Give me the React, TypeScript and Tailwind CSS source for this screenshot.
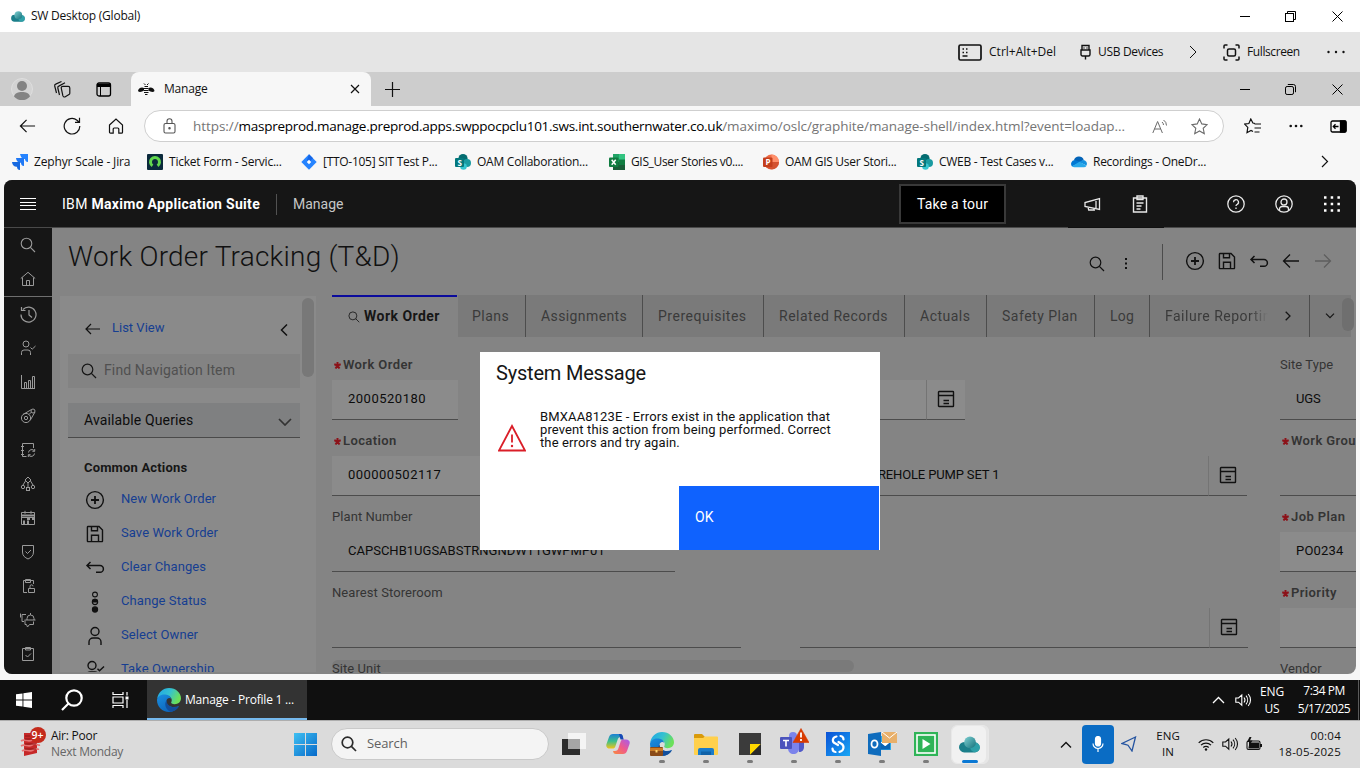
import type { ReactNode } from "react";

type IconProps = { size?: number; w?: number; h?: number; vb?: string; sw?: number; className?: string; children: ReactNode };

function Svg({ size = 16, w, h, vb, sw = 1, className = "", children }: IconProps) {
  const width = w ?? size;
  const height = h ?? size;
  return (
    <svg width={width} height={height} viewBox={vb ?? `0 0 ${width} ${height}`} fill="none" stroke="currentColor" strokeWidth={sw} className={`shrink-0 ${className}`}>
      {children}
    </svg>
  );
}

const SearchIcon = ({ size = 16, className = "", sw = 1.1 }: { size?: number; className?: string; sw?: number }) => (
  <Svg size={size} vb="0 0 16 16" sw={sw} className={className}><circle cx="6.5" cy="6.5" r="5.3" /><path d="M10.4 10.4 15 15" /></Svg>
);
const BackArrow = ({ w = 18, className = "" }: { w?: number; className?: string }) => (
  <Svg w={w} h={16} vb="0 0 18 16" sw={1.3} className={className}><path d="M8 1.5 1.5 8 8 14.5M1.5 8H17" /></Svg>
);
const CircleAdd = ({ className = "" }) => (
  <Svg size={20} sw={1.4} className={className}><circle cx="10" cy="10" r="8.4" /><path d="M10 6v8M6 10h8" strokeWidth="1.8" /></Svg>
);
const SaveIcon = ({ className = "" }) => (
  <Svg size={18} sw={1.4} className={className}><path d="M2 1.5h11L16.5 5v11a.6.6 0 0 1-.6.6H2a.6.6 0 0 1-.6-.6V2a.6.6 0 0 1 .6-.5ZM5.5 1.5v4.3h6V1.5M5.5 16.5v-6.2h7v6.2" /></Svg>
);
const UndoIcon = ({ className = "" }) => (
  <Svg w={20} h={14} sw={1.5} className={className}><path d="M5.500 1 2 4.500 5.500 8M2 4.500h13a3.400 3.400 0 0 1 0 6.800H11" /></Svg>
);
const StatusIcon = () => (
  <Svg w={8} h={22} sw={1.1}><circle cx="4" cy="3.500" r="2.400" /><circle cx="4" cy="11" r="2.600" /><path d="M1.400 11a2.600 2.600 0 0 1 5.200 0Z" fill="currentColor" /><circle cx="4" cy="18.500" r="2.600" fill="currentColor" /></Svg>
);
const UserIcon = () => (
  <Svg w={16} h={20} sw={1.4}><circle cx="8" cy="5.5" r="4" /><path d="M2 19v-3a4 4 0 0 1 4-4h4a4 4 0 0 1 4 4v3" /></Svg>
);
const OwnerIcon = () => (
  <Svg w={20} h={20} sw={1.4}><circle cx="7" cy="5.5" r="4" /><path d="M1 19v-3a4 4 0 0 1 4-4h5a4 4 0 0 1 4 4v3M12.5 8.7l2 2L19 6.5" /></Svg>
);
const DetailIcon = () => (
  <Svg size={18} sw={1.4} className="mb-px text-[#111]"><rect x="1.5" y="1.5" width="15" height="15" rx=".6" /><path d="M1.5 5.5h15M6.5 10.500h5.500M6.5 13.500h5.500" /></Svg>
);

function WindowButtons({ rounded = false }: { rounded?: boolean }) {
  return (
    <div className="flex text-black">
      <div className="flex w-[46px] items-center justify-center"><Svg size={10}><path d="M0 5.5h10" /></Svg></div>
      <div className="flex w-[45px] items-center justify-center">
        <Svg size={11}><rect x=".5" y="2.5" width="8" height="8" rx={rounded ? 1.6 : 0} /><path d={rounded ? "M2.8.5h5.6a2.1 2.1 0 0 1 2.1 2.1v5.6" : "M2.5 2.5v-2h8v8h-2"} /></Svg>
      </div>
      <div className="flex w-[47px] items-center justify-center pl-px"><Svg size={11}><path d="m.5.5 10 10M10.5.5l-10 10" /></Svg></div>
    </div>
  );
}

const Cloud = ({ w = 14, h = 11 }: { w?: number; h?: number }) => (
  <svg width={w} height={h} viewBox="0 0 20 16" className="shrink-0">
    <defs>
      <linearGradient id="cl" x1="0" y1="0" x2="1" y2="1"><stop offset="0" stopColor="#7fd0d2" /><stop offset="1" stopColor="#15727c" /></linearGradient>
    </defs>
    <path d="M5 5.5a5 5 0 0 0 0 10h10a4.6 4.6 0 0 0 0-9.4Z" fill="#1b7f8a" />
    <circle cx="15.3" cy="10.8" r="4.6" fill="#2ea0a8" />
    <circle cx="10.5" cy="6" r="5.6" fill="url(#cl)" />
  </svg>
);

const EdgeLogo = ({ id, size = 24 }: { id: string; size?: number }) => (
  <svg width={size} height={size} viewBox="0 0 24 24" className="shrink-0">
    <defs>
      <linearGradient id={`${id}a`} x1="0" y1="0" x2="1" y2=".4"><stop offset="0" stopColor="#1fa5e6" /><stop offset=".55" stopColor="#35c1d0" /><stop offset="1" stopColor="#6be05a" /></linearGradient>
      <linearGradient id={`${id}b`} x1="0" y1="0" x2=".7" y2="1"><stop offset="0" stopColor="#1b8fe0" /><stop offset="1" stopColor="#0b62b8" /></linearGradient>
    </defs>
    <path d="M.2 10.500C1.200 4.500 6 0 12 0c7 0 12 5 12 10.300 0 3.800-3 5.900-6.300 5.900-2.600 0-3.900-.9-3.500-1.900 1.400-2 .3-6.300-4.500-6.500C5 7.500 1.500 8.500.2 10.500Z" fill={`url(#${id}a)`} />
    <path d="M0 12C0 9 3.500 6 8.500 6.500c3 .2 5.300 2 5.700 4.300-1.500-1.500-4.200-1-4.700 1.700-.8 5 5.500 8.300 12.500 5.500C19.500 22 16 24 12 24 5.200 24 0 18.600 0 12Z" fill={`url(#${id}b)`} />
    <path d="M9.500 12.300c-2.500 3.500-1 9.200 4 11.500 3.500-.4 6.500-2.300 8.600-5.600-6.500 2.500-12.500 0-12.600-5.900Z" fill="#124e9c" />
  </svg>
);

const SharePoint = () => (
  <svg width="16" height="16" viewBox="0 0 16 16"><circle cx="8" cy="4.600" r="4.600" fill="#036c70" /><circle cx="12" cy="9" r="4" fill="#1a9ba1" /><circle cx="8.500" cy="12.500" r="3.300" fill="#37c6d0" /><rect y="4" width="9" height="9" rx="1" fill="#03787c" /><text x="4.500" y="11.500" textAnchor="middle" className="fill-white font-['Open_Sans',sans-serif] text-[8px] font-bold">S</text></svg>
);

const bookmarks: { label: string; icon: ReactNode; cls: string }[] = [
  { label: "Ticket Form - Servic...", cls: "tracking-[-0.22px]", icon: <svg width="16" height="16" viewBox="0 0 16 16"><rect width="16" height="16" rx="1" fill="#0b2a3c" /><path d="M5.500 11.800A4.500 4.500 0 1 1 10.500 11.800" fill="none" stroke="#62d84e" strokeWidth="3" /></svg> },
  { label: "[TTO-105] SIT Test P...", cls: "tracking-[-0.28px]", icon: <svg width="16" height="16" viewBox="0 0 16 16"><path d="M8 .3 15.700 8 8 15.700.3 8Z" fill="#2684ff" /><path d="m8 .3 4 4-4 3.700-2-2Z" fill="#1565e6" /><path d="m8 5.800 2.200 2.200L8 10.200 5.800 8Z" fill="#fff" /></svg> },
  { label: "OAM Collaboration...", cls: "tracking-[-0.25px]", icon: <SharePoint /> },
  { label: "GIS_User Stories v0....", cls: "tracking-[-0.35px]", icon: <svg width="16" height="16" viewBox="0 0 16 16"><path d="M4 0h12v16H4Z" fill="#21a366" /><path d="M10 0h6v5h-6Z" fill="#33c481" /><path d="M4 0h6v8H4Z" fill="#21a366" /><path d="M4 8h6v8H4ZM10 11h6v5h-6Z" fill="#185c37" /><path d="M10 6h6v5h-6Z" fill="#107c41" /><rect y="3.500" width="9.500" height="9.500" rx="1" fill="#107c41" /><path d="m2.700 5.700 4 5M6.700 5.700l-4 5" stroke="#fff" strokeWidth="1.500" /></svg> },
  { label: "OAM GIS User Stori...", cls: "tracking-[-0.28px]", icon: <svg width="16" height="16" viewBox="0 0 16 16"><circle cx="8.500" cy="8" r="7.500" fill="#ed6c47" /><path d="M8.500.5A7.500 7.500 0 0 1 16 8H8.500Z" fill="#ff8f6b" /><path d="M1.500 10.500A7.500 7.500 0 0 0 16 8H8Z" fill="#d35230" /><rect y="3.500" width="9.500" height="9.500" rx="1" fill="#c43e1c" /><text x="4.800" y="11.200" textAnchor="middle" className="fill-white font-['Open_Sans',sans-serif] text-[8px] font-bold">P</text></svg> },
  { label: "CWEB - Test Cases v...", cls: "tracking-[-0.28px]", icon: <SharePoint /> },
  { label: "Recordings - OneDr...", cls: "tracking-[-0.26px]", icon: <svg width="16" height="12" viewBox="0 0 16 12"><path d="M3 4a5.200 5.200 0 0 1 9.700-.5L8 8Z" fill="#0364b8" /><path d="M3.500 4A4 4 0 0 0 1 10.500L10 6.300Z" fill="#0078d4" /><path d="M12 4a3.800 3.800 0 0 1 3.500 5.500L8 6Z" fill="#1490df" /><path d="M1 10.300 8.500 5.800l7 3.900a3 3 0 0 1-2.600 1.600H3.800A3.500 3.500 0 0 1 1 10.300Z" fill="#28a8ea" /></svg> },
];

const railTop: ReactNode[] = [
  <SearchIcon size={16} />,
  <Svg size={16}><path d="M.8 7.500 8 1.300l7.200 6.200M2.500 6.500v8h11v-8M6.500 14.500v-5h3v5" /></Svg>,
];
const railIcons: ReactNode[] = [
  <Svg size={17} sw={1.200}><path d="M3 3.500a7.500 7.500 0 1 1-2 5M1.500 1v3.500h4M9 4v5l3 2.500" /></Svg>,
  <Svg size={16}><circle cx="6" cy="4" r="3" /><path d="M1.500 15v-2.500A2.500 2.500 0 0 1 4 10h4a2.500 2.500 0 0 1 2.500 2.500V15M10.500 7.500l1.700 1.700L15.500 6" /></Svg>,
  <Svg size={16}><path d="M1.500 1v13.500H15M4.500 14.500v-6h2v6M8.500 14.500v-8h2v8M12.500 14.500v-12h2v12" /></Svg>,
  <Svg size={16}><circle cx="6" cy="10" r="4.600" /><circle cx="6" cy="10" r="1.700" /><circle cx="13" cy="3" r="2" /><path d="m3 6.500 8.500-5M10.200 12.300 15 4M9 6.500l2.500-2.500" /></Svg>,
  <Svg size={16}><path d="M13.500 6V1.500h-11v13h4M1 4.500h3M1 8.500h3M1 12.500h3M14.500 9a3.300 3.300 0 0 0-6 1.500M8.500 13a3.300 3.300 0 0 0 6-1.500M14.700 7v2.300h-2.300M8.300 15v-2.300h2.300" /></Svg>,
  <Svg size={16}><path d="M8 1 11 4 8 7 5 4ZM8 7v4M5.500 5 3 9M10.500 5 13 9" /><circle cx="3" cy="11" r="1.700" /><circle cx="13" cy="11" r="1.700" /><rect x="6.500" y="11.500" width="3" height="3" /></Svg>,
  <Svg size={16}><path d="M1.500 2.500h13v12h-13ZM5 .8v3M11 .8v3" /><path d="M2 4.500h12v2H2ZM7 7h3v3H7ZM12 7h2v3h-2ZM3 10.500h2v3.500H3ZM7 10.500h2v3.500H7Z" fill="currentColor" stroke="none" /><path d="M1.500 7.500h13" /></Svg>,
  <Svg size={16}><path d="M2.500 1.500h11V8c0 4-2.500 5.500-5.500 7-3-1.500-5.500-3-5.500-7ZM5.500 7.500l2 2L11 6" /></Svg>,
  <Svg size={16}><path d="M7 14.500H3.500v-12h10V6M5.500 1.500h5v3h-5ZM8.500 10.500h6v4h-6ZM10 10.500V8.300a1.500 1.500 0 0 1 3 0" /></Svg>,
  <Svg size={16}><path d="M6 2.500H2v7h2M.5 1.500v4M13.500 9.500v3H9.500l-2 2.500-1-2.500H5v-5M5.500 8h10M7 8V6.500a3.500 3.500 0 0 1 7 0V8M10.500 3V1" /></Svg>,
  <Svg size={16}><path d="M2.500 2.500h11v12h-11ZM5.500 1.500h5v2.500h-5ZM5.500 9l2 2L11 7.500" /></Svg>,
];

const actions: { label: string; icon: ReactNode }[] = [
  { label: "New Work Order", icon: <CircleAdd /> },
  { label: "Save Work Order", icon: <SaveIcon /> },
  { label: "Clear Changes", icon: <UndoIcon /> },
  { label: "Change Status", icon: <StatusIcon /> },
  { label: "Select Owner", icon: <UserIcon /> },
  { label: "Take Ownership", icon: <OwnerIcon /> },
];

function Label({ text, required }: { text: string; required?: boolean }) {
  return (
    <div className={`flex h-[30px] items-center whitespace-nowrap text-[13px] text-[#343434] ${required ? "font-semibold tracking-[0.4px]" : "tracking-[0.07px]"}`}>
      {required && <Svg size={7} sw={2} className="ml-[2px] mr-[2px] text-[#8c1219]"><path d="M3.500 0v3.500M.3 2.300l3.200 1.200M6.700 2.300 3.500 3.500M1.500 6.500l2-3M5.500 6.500l-2-3" /></Svg>}
      {text}
    </div>
  );
}

function Field({ label, required, value = "", box = "w-full", fill = true, track = "tracking-[0.2px]" }: { label: string; required?: boolean; value?: string; box?: string; fill?: boolean; track?: string }) {
  return (
    <div className="h-[76px]">
      <Label text={label} required={required} />
      <div className={`flex h-10 items-center whitespace-nowrap border-b border-[#4c4c4c] pb-[2px] pl-4 text-[13px] text-[#0c0c0c] ${track} ${box} ${fill ? "bg-[#8b8b8b]" : ""}`}>{value}</div>
    </div>
  );
}

function DetailField({ value = "", width, fill = false }: { value?: string; width: string; fill?: boolean }) {
  return (
    <div className="flex h-[76px] pt-[30px]">
      <div className={`flex h-10 items-center whitespace-nowrap border-b border-[#4c4c4c] pb-[2px] pl-[78px] text-[13px] tracking-[-0.15px] text-[#0c0c0c] ${width} ${fill ? "bg-[#8b8b8b]" : ""}`}>{value}</div>
      <div className={`flex h-10 w-[39px] items-center justify-center border-b border-l border-b-[#4c4c4c] border-l-[#747474] ${fill ? "bg-[#8b8b8b]" : ""}`}><DetailIcon /></div>
    </div>
  );
}

const tabs = [
  { label: "Plans", cls: "w-[68px] pl-[14px]" },
  { label: "Assignments", cls: "w-[117px] pl-[15px] tracking-[0.4px]" },
  { label: "Prerequisites", cls: "w-[121px] pl-[15px] tracking-[0.52px]" },
  { label: "Related Records", cls: "w-[141px] pl-[15px]" },
  { label: "Actuals", cls: "w-[82px] pl-[15px]" },
  { label: "Safety Plan", cls: "w-[108px] pl-[15px]" },
  { label: "Log", cls: "w-[55px] pl-[15px] tracking-[0.3px]" },
];

const pinned: { icon: ReactNode; dot: boolean }[] = [
  { dot: false, icon: <svg width="24" height="24" viewBox="0 0 24 24"><rect x="6" y="1" width="18" height="16" fill="#f4f4f4" /><path d="M0 7h18v16H0Z" fill="#2c2c2c" /><path d="M6 7h12v10H6Z" fill="#a5a5a5" /></svg> },
  { dot: false, icon: <svg width="24" height="24" viewBox="0 0 24 24"><defs><linearGradient id="cp1" x1="0" y1="0" x2="0" y2="1"><stop offset="0" stopColor="#1b7fd6" /><stop offset=".5" stopColor="#3cc08b" /><stop offset="1" stopColor="#f2c318" /></linearGradient><linearGradient id="cp2" x1="1" y1="0" x2="0" y2="1"><stop offset="0" stopColor="#a35cf0" /><stop offset=".5" stopColor="#ef5a8c" /><stop offset="1" stopColor="#f98a3c" /></linearGradient></defs><path d="M7 2h7c2 0 2.500 1 3 3h-2c-2 0-3 1-3.500 3l-2 6c-.5 2-1.500 2.500-3 2.500H4C1 16.500-.3 14.500.5 12L3 5c.7-2 2-3 4-3Z" fill="url(#cp1)" /><path d="M17 22h-7c-2 0-2.500-1-3-3h2c2 0 3-1 3.500-3l2-6c.5-2 1.500-2.500 3-2.500H20c3 0 4.300 2 3.500 4.500L21 19c-.7 2-2 3-4 3Z" fill="url(#cp2)" /><path d="M13 2h1c2 0 2.500 1 3 3l.7 2.500h-3.200Z" fill="#1848b5" /></svg> },
  { dot: true, icon: <div className="relative"><EdgeLogo id="e2" /><svg width="13" height="9" viewBox="0 0 13 9" className="absolute bottom-0 left-0"><rect width="13" height="9" rx="1" fill="#8a4a17" /><path d="M0 1h13v3H0Z" fill="#c97a26" /><path d="M5.500 3h2v2.500h-2Z" fill="#ffd36b" /></svg></div> },
  { dot: true, icon: <svg width="24" height="24" viewBox="0 0 24 24"><path d="M0 3a1 1 0 0 1 1-1h7l2.500 2.500V8H0Z" fill="#d99a0b" /><path d="M0 6h9l2-1.500h12a1 1 0 0 1 1 1V22a1 1 0 0 1-1 1H1a1 1 0 0 1-1-1Z" fill="#ffd04c" /><path d="M4 23v-5a2 2 0 0 1 2-2h12a2 2 0 0 1 2 2v5Z" fill="#1b7cc9" /><path d="M7 19.500h10V23H7Z" fill="#1062a8" /></svg> },
  { dot: true, icon: <svg width="22" height="22" viewBox="0 0 22 22"><path d="M0 0h22v22H0Z" fill="#3b3b3b" /><path d="M11 22V11h11Z" fill="#ffd800" /><path d="M22 11v11H11Z" fill="#2a2a2a" /></svg> },
  { dot: true, icon: <svg width="29" height="28" viewBox="0 0 29 28" className="-mt-1"><circle cx="13" cy="8" r="4" fill="#7b83eb" /><circle cx="21" cy="10" r="2.500" fill="#5059c9" /><path d="M17 12h7v7c0 3-2 5-5 5Z" fill="#5059c9" /><path d="M8 12h11v8c0 4-2.500 6-5.500 6S8 24 8 20Z" fill="#7b83eb" /><rect y="9" width="12" height="12" rx="1" fill="#4b53bc" /><path d="M3 12.500h6M6 12.500v6" stroke="#fff" strokeWidth="1.600" /><path d="M21 .5 29 14.500H13Z" fill="#d83b01" strokeLinejoin="round" stroke="#d83b01" strokeWidth=".6" /><path d="M21 4.500v5M21 11v2" stroke="#fff" strokeWidth="1.800" /></svg> },
  { dot: true, icon: <svg width="24" height="24" viewBox="0 0 24 24"><defs><linearGradient id="sn" x1="0" y1="0" x2="1" y2="1"><stop offset="0" stopColor="#0a51d6" /><stop offset="1" stopColor="#19a7f5" /></linearGradient></defs><rect width="24" height="24" fill="url(#sn)" /><path d="M10.500 4.500C6.500 5 5.500 9.500 9 11.300L12 13M12.500 10l2.500 1.500c4 2 3 7.500-1.500 8.300M14.500 4a3.500 3.500 0 0 1 3 3.500M9.500 20a3.500 3.500 0 0 1-3-3.500" stroke="#fff" strokeWidth="2.200" fill="none" strokeLinecap="round" /></svg> },
  { dot: true, icon: <svg width="29" height="24" viewBox="0 0 29 24"><path d="M11 4h12v14H11Z" fill="#28a8ea" /><path d="M12 10h10v7H12Z" fill="#fff" /><path d="m12 10 5 4 5-4v7.500H12Z" fill="#0a64b4" /><path d="M14 11h7l-3.500 3Z" fill="#fff" /><path d="M0 2 13 0v24L0 22Z" fill="#0f6cbd" /><ellipse cx="6.500" cy="12" rx="3" ry="3.700" stroke="#fff" strokeWidth="1.800" fill="none" /><path d="M14 0h15v11H14Z" fill="#e8b06b" /><path d="m14 0 7.500 6L29 0" stroke="#fff" fill="none" /></svg> },
  { dot: true, icon: <svg width="24" height="24" viewBox="0 0 24 24"><rect width="24" height="24" fill="#2fb457" /><rect x="3" y="3" width="18" height="18" fill="none" stroke="#fff" strokeWidth="1.600" /><path d="m8.500 7 8 5-8 5Z" fill="#fff" /></svg> },
];

const Volume = ({ className = "" }) => (
  <Svg w={17} h={14} sw={1.1} className={className}><path d="M.8 5v4.200h2.700l3.300 3V2L3.500 5ZM9 4.500a4 4 0 0 1 0 5M11 2.700a6.500 6.500 0 0 1 0 8.600M13.200 1a9 9 0 0 1 0 12" /></Svg>
);

export default function App() {
  return (
    <div className="flex h-[768px] w-[1360px] flex-col overflow-hidden bg-[#f7f7f7] font-['Open_Sans','Noto_Sans',sans-serif] text-[12px] text-[#111]">
      {/* Remote client title bar */}
      <div className="flex h-8 shrink-0 justify-between bg-white">
        <div className="flex items-center gap-[6px] pl-[11px] tracking-[-0.22px]"><Cloud /><span>SW Desktop (Global)</span></div>
        <WindowButtons />
      </div>

      {/* Remote client toolbar */}
      <div className="flex h-10 shrink-0 items-center whitespace-nowrap bg-[#e5e5e5] pl-[958px]">
        <div className="w-[31px]"><Svg w={24} h={17} sw={1.7}><rect x="1" y="1" width="22" height="15" rx="1.500" /><path d="M4.500 5h1.500M8 5h1.500M4.500 8.500h1.500M8 8.500h1.500M4.500 12h5" strokeWidth="1.500" /></Svg></div>
        <div className="w-[91px] tracking-[0.02px]">Ctrl+Alt+Del</div>
        <div className="w-[18px]"><Svg w={11} h={16} sw={1.400}><path d="M2 6V1.500h7V6M1 6h9v4.500a1.500 1.500 0 0 1-1.500 1.500h-6A1.500 1.500 0 0 1 1 10.500ZM5.500 12v3.500M4 3.500v1M7 3.500v1" /></Svg></div>
        <div className="w-[91px] tracking-[-0.33px]">USB Devices</div>
        <div className="w-[34px]"><Svg w={8} h={14}><path d="m1 1 6 6-6 6" /></Svg></div>
        <div className="w-6"><Svg size={17} sw={1.500}><path d="M1 4.500V2a1 1 0 0 1 1-1h2.500M12.500 1H15a1 1 0 0 1 1 1v2.500M16 12.500V15a1 1 0 0 1-1 1h-2.500M4.500 16H2a1 1 0 0 1-1-1v-2.500" /><rect x="4.500" y="5" width="8" height="7" rx="1.500" /></Svg></div>
        <div className="w-[80px] tracking-[-0.4px]">Fullscreen</div>
        <Svg w={19} h={4}><g fill="currentColor" stroke="none"><circle cx="1.500" cy="2" r="1.200" /><circle cx="9" cy="2" r="1.200" /><circle cx="16.500" cy="2" r="1.200" /></g></Svg>
      </div>

      {/* Browser tab strip */}
      <div className="flex h-[34px] shrink-0 bg-[#cdcdcd]">
        <div className="flex w-[131px] items-center pl-[11px]">
          <svg width="22" height="22" viewBox="0 0 22 22"><circle cx="11" cy="11" r="10.500" fill="#d3d3d3" stroke="#dedede" /><circle cx="11" cy="8" r="5" fill="#838383" /><path d="M3 18.500C4 15 7 14 11 14s7 1 8 4.500a10.500 10.500 0 0 1-16 0Z" fill="#838383" /></svg>
          <Svg size={18} sw={1.200} className="ml-5"><path d="M3.500 13 1.700 6a1.600 1.600 0 0 1 1-1.900L8.500 1.500M6.500 15 4.800 8a1.600 1.600 0 0 1 1-1.900l6.200-3.300" /><path d="M9.800 6.300h5.400a1.600 1.600 0 0 1 1.600 1.600v5.400c0 .6-.3 1-.8 1.300l-3.700 2.200c-.9.500-2 .1-2.400-.9L8.300 8.400a1.600 1.600 0 0 1 1.500-2.100Z" /></Svg>
          <Svg w={16} h={15} sw={1.300} className="ml-[25px] text-black"><rect x="1" y="1" width="13.500" height="13" rx="2" /><path d="M1 2.700h13.500M1 4h13.500" strokeWidth="2" /><path d="M4.500 4v10" strokeWidth="1" /></Svg>
        </div>
        <div className="flex w-[240px] items-center rounded-t-lg bg-[#f7f7f7] pl-[7px]">
          <svg width="17" height="12" viewBox="0 0 17 12" className="text-[#111]"><path d="M0 8C0 5.500 3.500 3.500 6 5v2.500C4 9 1 9.500 0 8ZM16.500 8c0-2.500-3.500-4.500-6-3v2.500C12.500 9 15.500 9.500 16.500 8Z" fill="currentColor" /><path d="M6 .5l1.500 1.500M10.500.5 9 2M6.500 3.500h3.500M6 5.500h4.500M6 7.500h4.500M6 9.500h4.500M7 11.500h2.500" stroke="currentColor" /></svg>
          <span className="ml-[9px] flex-1 tracking-[-0.2px]">Manage</span>
          <Svg size={10} sw={1.200} className="mr-[11px]"><path d="m1 1 8 8M9 1 1 9" /></Svg>
        </div>
        <div className="flex flex-1 items-center pl-[14px]"><Svg size={15} sw={1.200}><path d="M7.500 0v15M0 7.500h15" /></Svg></div>
        <WindowButtons rounded />
      </div>

      {/* Address bar */}
      <div className="flex h-10 shrink-0 items-center">
        <div className="flex w-[144px] items-center pl-[19px]">
          <BackArrow w={17} />
          <Svg size={18} sw={1.200} className="ml-[27px]"><path d="M16.800 9A7.800 7.800 0 1 1 14 3.200L16 5M16.500.8V5.300H12" /></Svg>
          <Svg size={16} sw={1.200} className="ml-[27px]"><path d="M1.500 7 8 1l6.500 6v7.200a1 1 0 0 1-1 1h-2.700V11a1 1 0 0 0-1-1H6.200a1 1 0 0 0-1 1v4.200H2.500a1 1 0 0 1-1-1Z" /></Svg>
        </div>
        <div className="flex h-8 w-[1080px] items-center rounded-full border border-[#cfcfcf] bg-white pl-[18px]">
          <Svg w={13} h={16} className="text-[#555]" sw={1.100}><rect x="1" y="5.500" width="11" height="9.500" rx="1.500" /><path d="M4 5.500V3.300a2.500 2.500 0 0 1 5 0v2.200" /><circle cx="6.500" cy="10.300" r=".7" fill="currentColor" /></Svg>
          <div className="ml-[17px] w-[959px] whitespace-nowrap text-[13.500px] tracking-[-0.06px] text-[#757575]">https://<span className="tracking-[-0.27px] text-black">maspreprod.manage.preprod.apps.swppocpclu101.sws.int.southernwater.co.uk</span>/maximo/oslc/graphite/manage-shell/index.html?event=loadap...</div>
          <Svg w={16} h={15} className="text-[#6b6b6b]"><path d="M.8 14 5.600 2.500 10.400 14M2.400 10h6.400M10 3a4 4 0 0 1 1.500 3M11.500 1a6.500 6.500 0 0 1 3 5.500" /></Svg>
          <Svg size={17} className="ml-[23px] text-[#6b6b6b]" sw={1.100}><path d="m8.500 1 2.300 4.900 5.400.7-4 3.700 1.100 5.400-4.800-2.700-4.800 2.700 1.100-5.400-4-3.700 5.400-.7Z" /></Svg>
        </div>
        <Svg w={18} h={17} sw={1.200} className="ml-5"><path d="M11 5.500 8.900 5 6.800 1 4.900 5.500l-4.300.6 3.200 3.300-.8 5.300 4-2.300 2 1.200M10.500 6h6.500M10.500 10h6.500M10.500 14h5" /></Svg>
        <Svg w={14} h={4} className="ml-[27px]"><g fill="currentColor" stroke="none"><circle cx="1.700" cy="2" r="1.300" /><circle cx="7" cy="2" r="1.300" /><circle cx="12.300" cy="2" r="1.300" /></g></Svg>
        <Svg w={17} h={13} sw={1.300} className="ml-[27px] text-black"><rect x="1" y="1" width="15" height="11" rx="1.500" /><path d="M10.500 1H15a1 1 0 0 1 1 1v9a1 1 0 0 1-1 1h-4.500Z" fill="currentColor" /><path d="M5.500 4.300 3.300 6.500l2.200 2.200M3.500 6.500h5" /></Svg>
      </div>

      {/* Bookmarks bar */}
      <div className="flex h-[34px] shrink-0 items-center whitespace-nowrap pb-[3px] pl-3">
        <div className="flex w-[135px] items-center gap-[6px] tracking-[-0.14px]">
          <svg width="16" height="16" viewBox="0 0 16 16"><path d="M8 0h8v8c-2.200 0-3-1.500-3-3-2 0-3.500 0-5-5Z" fill="#2684ff" /><path d="M4 4h8v8c-2.200 0-3-1.500-3-3.300C6.500 8.700 4.500 7.500 4 4Z" fill="#1f78f5" /><path d="M0 8h8v8c-2.200 0-3-1.500-3-3.300C2.500 12.700.5 11.500 0 8Z" fill="#1769e0" /></svg>
          Zephyr Scale - Jira
        </div>
        {bookmarks.map((b) => (
          <div key={b.label} className={`flex w-[154px] items-center gap-[6px] ${b.cls}`}><span className="flex w-4">{b.icon}</span>{b.label}</div>
        ))}
        <Svg w={8} h={13} sw={1.200} className="ml-[96px]"><path d="m1 1 5.500 5.500L1 12" /></Svg>
      </div>

      {/* Remote page */}
      <div className="relative mx-1 flex h-[494px] shrink-0 flex-col overflow-hidden rounded-lg bg-[#848484] font-['Roboto','Inter',sans-serif]">
        <header className="flex h-[47px] shrink-0 items-center bg-[#161616] pt-px text-[14px] text-[#e8e8e8]">
          <Svg w={16} h={12} className="ml-4 text-white"><path d="M0 .5h16M0 4.500h16M0 7.500h16M0 11.500h16" /></Svg>
          <div className="ml-[26px] w-[215px] whitespace-nowrap border-r border-[#525252] font-bold tracking-[0.3px] text-white"><span className="font-normal">IBM</span> Maximo Application Suite</div>
          <div className="ml-4 w-[606px] text-[#c6c6c6]">Manage</div>
          <div className="flex h-10 w-[107px] items-center justify-center border-2 border-[#393939] bg-black tracking-[0.2px] text-white">Take a tour</div>
          <div className="ml-[62px] flex w-12 justify-center"><Svg size={18} sw={1.300}><path d="M16.500 3.500v11L2 11.500v-4ZM5 12l.7 3h5.500l-.5-1.700M13 4.500v9" /></Svg></div>
          <div className="flex w-12 justify-center"><Svg w={16} h={18} sw={1.400}><path d="M1.500 3h13v14h-13Z" /><path d="M5 1h6v3.500H5ZM4.500 8h7M4.500 11h5M4.500 14h4" /></Svg></div>
          <div className="ml-12 flex w-12 justify-center"><Svg size={18} sw={1.300}><circle cx="9" cy="9" r="8.200" /><path d="M6.500 7.200a2.500 2.500 0 1 1 3.700 2.200c-.8.400-1.200.8-1.200 1.600M9 12.500V14" /></Svg></div>
          <div className="flex w-12 justify-center"><Svg size={18} sw={1.300}><circle cx="9" cy="9" r="8.200" /><circle cx="9" cy="7" r="3" /><path d="M4.500 15v-1a2.500 2.500 0 0 1 2.500-2.500h4a2.500 2.500 0 0 1 2.500 2.500v1" /></Svg></div>
          <div className="flex w-12 justify-center"><Svg size={16} sw={2.500} className="text-white"><path d="M0 1.500h16M0 8h16M0 14.500h16" strokeDasharray="2.500 4.200" /></Svg></div>
        </header>
        <div className="flex h-px shrink-0 bg-[#4a4a4a] pl-[1064px]"><div className="h-px w-24 bg-[#111]" /></div>

        <div className="flex h-[446px]">
          <nav className="w-12 shrink-0 bg-[#161616] text-[#9a9a9a]">
            <div className="border-b border-[#6f6f6f]">
              {railTop.map((icon, i) => <div key={i} className="flex h-[34px] items-center justify-center">{icon}</div>)}
            </div>
            {railIcons.map((icon, i) => <div key={i} className="flex h-[34px] items-center justify-center">{icon}</div>)}
          </nav>

          <main className="flex w-[1304px] flex-col overflow-hidden">
            <div className="flex h-[67px] shrink-0 text-[#111]">
              <h1 className="w-[1037px] whitespace-nowrap pl-4 pt-[10px] text-[28px] font-light leading-[38px] tracking-[0.22px]">Work Order Tracking (T&amp;D)</h1>
              <SearchIcon size={16} sw={1.200} className="mt-7" />
              <Svg w={4} h={12} className="ml-[19px] mt-[30px]"><path d="M1 0h2v2H1ZM1 4.500h2v2H1ZM1 9h2v2H1Z" fill="currentColor" stroke="none" /></Svg>
              <div className="ml-[34px] mt-4 h-9 w-px bg-[#4c4c4c]" />
              <div className="ml-4 flex h-[66px] items-center">
                <div className="flex w-8 justify-center"><CircleAdd /></div>
                <div className="flex w-8 justify-center"><SaveIcon /></div>
                <div className="flex w-8 justify-center"><UndoIcon className="mt-px" /></div>
                <div className="flex w-8 justify-center"><BackArrow /></div>
                <div className="flex w-8 justify-center text-[#5e5e5e]"><BackArrow className="rotate-180" /></div>
              </div>
            </div>

            <div className="flex h-[379px]">
              {/* Navigation panel */}
              <aside className="relative ml-2 mt-px h-[376px] w-64 shrink-0 overflow-hidden bg-[#8a8a8a] px-2 text-[13px]">
                <div className="absolute right-[2px] top-[2px] h-[79px] w-3 rounded-full bg-[#787878]" />
                <div className="flex h-[58px] items-center pl-[17px] pt-[6px]">
                  <Svg w={15} h={12} sw={1.200} className="mt-[2px]"><path d="M6 1 1 6l5 5M1 6h14" /></Svg>
                  <span className="ml-3 w-[168px] text-[#163e91]">List View</span>
                  <Svg w={8} h={12} sw={1.500} className="mt-1"><path d="M7 .5 1.500 6 7 11.500" /></Svg>
                </div>
                <div className="flex h-[34px] w-[232px] items-center bg-[#838383] pb-px pl-[13px] text-[14px] tracking-[0.12px] text-[#505050]">
                  <SearchIcon size={16} className="mr-[7px] mt-px text-[#161616]" sw={1.200} />Find Navigation Item
                </div>
                <div className="mt-[15px] flex h-[35px] w-[232px] items-center border-b border-[#4a4a4a] bg-[#7f8081] pl-4 text-[14px] tracking-[0.13px] text-[#0d0d0d]">
                  <span className="w-[194px]">Available Queries</span>
                  <Svg w={14} h={8} sw={1.700} className="mt-1 text-[#333]"><path d="m1 1 6 6 6-6" /></Svg>
                </div>
                <h2 className="mt-[19px] h-[25px] pl-4 pt-px font-bold tracking-[0.17px] text-[#161616]">Common Actions</h2>
                {actions.map((a) => (
                  <div key={a.label} className="flex h-[34px] items-center pl-[14px]">
                    <span className="mt-[2px] flex w-[26px] justify-center">{a.icon}</span>
                    <span className="ml-[13px] tracking-[0.08px] text-[#163e91]">{a.label}</span>
                  </div>
                ))}
              </aside>

              {/* Record form */}
              <section className="relative ml-4 w-[1024px] overflow-hidden">
                <div className="flex h-[42px] whitespace-nowrap text-[14px] tracking-[0.5px] text-[#3a3a3a]">
                  <div className="mr-px flex w-[125px] items-center border-t-2 border-[#0b0b9c] pb-px pl-4 font-bold tracking-[0.47px] text-[#161616]">
                    <SearchIcon size={12} className="mr-[4px] mt-px" />Work Order
                  </div>
                  {tabs.map((t) => (
                    <div key={t.label} className={`flex items-center border-r border-[#4d4d4d] bg-[#7a7a7a] ${t.cls}`}>{t.label}</div>
                  ))}
                  <div className="flex w-[160px] items-center border-r border-[#4d4d4d] bg-[#7a7a7a] pl-[15px]">
                    <span className="w-[103px] overflow-hidden [mask-image:linear-gradient(90deg,#000_82%,transparent)]">Failure Reporting</span>
                    <Svg w={6} h={10} sw={1.300} className="ml-[17px] text-[#161616]"><path d="m.7.7 4.300 4.300L.7 9.300" /></Svg>
                  </div>
                  <div className="flex w-[41px] items-center justify-center bg-[#7a7a7a] pr-[2px]"><Svg w={10} h={6} sw={1.200} className="text-[#161616]"><path d="m1 .7 4 4 4-4" /></Svg></div>
                </div>
                <div className="absolute left-[1010px] top-[3px] h-[33px] w-3 rounded-full bg-[#6f6f6f]" />
                <div className="absolute left-0 top-[365px] h-3 w-[522px] rounded-full bg-[#7a7a7a]" />

                <div className="relative grid h-[337px] grid-cols-[468px_480px_76px] pt-[13px]">
                  <div>
                    <Field label="Work Order" required value="2000520180" box="w-[126px]" track="tracking-[0.5px]" />
                    <Field label="Location" required value="000000502117" box="w-[343px]" track="tracking-[0.46px]" />
                    <Field label="Plant Number" value="CAPSCHB1UGSABSTRNGNDWT1GWPMP01" box="w-[343px]" fill={false} track="tracking-[0.01px]" />
                    <Field label="Nearest Storeroom" box="w-[409px]" fill={false} />
                    <Label text="Site Unit" />
                  </div>
                  <div>
                    <DetailField width="w-[126px]" fill />
                    <DetailField width="w-[408px]" value="REHOLE PUMP SET 1" />
                    <div className="h-[76px]" />
                    <DetailField width="w-[409px]" />
                  </div>
                  <div>
                    <Field label="Site Type" value="UGS" fill={false} track="tracking-[-0.1px]" />
                    <Field label="Work Grou" required fill={false} />
                    <Field label="Job Plan" required value="PO0234" />
                    <Field label="Priority" required />
                    <Label text="Vendor" />
                  </div>
                </div>
              </section>
            </div>
          </main>
        </div>

        {/* System message dialog */}
        <div role="dialog" className="absolute left-[476px] top-[172px] flex h-[198px] w-[400px] flex-col bg-white">
          <h2 className="h-[58px] pl-4 pt-[7px] text-[20px] leading-7 tracking-[-0.2px] text-[#161616]">System Message</h2>
          <div className="flex h-[76px] pl-[18px]">
            <Svg size={28} sw={1.800} className="mt-[14px] text-[#da1e28]"><path d="M14 2 27 26.500H1ZM14 10.500v8" /><circle cx="14" cy="22" r="1.200" fill="currentColor" stroke="none" /></Svg>
            <p className="ml-[14px] whitespace-nowrap text-[13px] leading-[13px] tracking-[0.11px] text-[#111]">BMXAA8123E - Errors exist in the application that<br />prevent this action from being performed. Correct<br />the errors and try again.</p>
          </div>
          <button className="ml-[199px] flex h-16 w-[200px] items-center bg-[#0f62fe] pb-[2px] pl-4 text-[14px] text-white">OK</button>
        </div>
      </div>
      <div className="h-[6px] shrink-0" />

      {/* Remote taskbar */}
      <div className="flex h-10 shrink-0 items-center bg-[#101010] text-white">
        <svg width="16" height="16" viewBox="0 0 16 16" className="ml-4 shrink-0"><path d="M0 2.300 6.500 1.400v6.200H0ZM7.400 1.200 16 0v7.600H7.400ZM0 8.400h6.500v6.200L0 13.700ZM7.400 8.400H16V16l-8.600-1.200Z" fill="#fff" /></svg>
        <Svg size={22} sw={2.200} className="ml-[29px]"><circle cx="13" cy="9" r="7.700" /><path d="M7.500 14.500 1 21" /></Svg>
        <Svg w={17} h={16} sw={1.200} className="ml-[29px]"><path d="M1 0v2.500h10V0M1 16v-2.500h10V16M1 5h10v6H1ZM15 0v3.500M15 8v8" /><path d="M13.500 4.500h3v3h-3Z" fill="currentColor" stroke="none" /></Svg>
        <div className="ml-[18px] flex h-10 w-[160px] shrink-0 items-center border-b-2 border-[#76b9ed] bg-[#333] pl-[10px] pt-[2px]">
          <EdgeLogo id="e1" /><span className="ml-1 whitespace-nowrap tracking-[-0.21px]">Manage - Profile 1 ...</span>
        </div>
        <Svg w={13} h={8} sw={1.300} className="ml-[905px]"><path d="m1 7 5.500-5.500L12 7" /></Svg>
        <Volume className="ml-[10px]" />
        <div className="ml-[5px] w-[30px] shrink-0 text-center leading-[17px] tracking-[-0.1px]">ENG<br />US</div>
        <div className="ml-[3px] w-[68px] shrink-0 whitespace-nowrap text-center leading-[18px] tracking-[-0.5px]">7:34 PM<br />5/17/2025</div>
        <div className="h-10 w-px shrink-0 bg-[#5a5a5a]" />
      </div>

      {/* Host taskbar */}
      <div className="flex h-12 shrink-0 items-center border-t border-[#aeaeae] bg-[#dbdbdb]">
        <svg width="26" height="30" viewBox="0 0 26 30" className="mb-[5px] ml-5 shrink-0"><path d="M4 6h13v20L4 29Z" fill="#c62828" /><path d="M1 14c4-3 7 2 11-1s5 1 7 0M1 19c4-3 7 2 11-1s5 1 8 0M2 24c4-3 7 2 11-1s4 0 6-1" stroke="#e57373" strokeWidth="1.600" fill="none" /><path d="M5 9h11M5 12h10M5 17h11M5 22h11" stroke="#8e1616" /><circle cx="18" cy="8" r="8" fill="#c42b1c" /><text x="17.500" y="12" textAnchor="middle" className="fill-white text-[10.500px] font-semibold">9+</text></svg>
        <div className="mb-[2px] ml-[5px] w-[243px] shrink-0 leading-4"><div className="tracking-[-0.25px]">Air: Poor</div><div className="tracking-[-0.25px] text-[#666]">Next Monday</div></div>
        <svg width="23" height="23" viewBox="0 0 23 23" className="shrink-0"><defs><linearGradient id="win" x1="0" y1="0" x2="1" y2="1"><stop offset="0" stopColor="#3fc0f2" /><stop offset="1" stopColor="#0669c9" /></linearGradient></defs><path d="M0 0h11v11H0ZM12 0h11v11H12ZM0 12h11v11H0ZM12 12h11v11H12Z" fill="url(#win)" /></svg>
        <div className="mb-px ml-[14px] flex h-8 w-[218px] shrink-0 items-center rounded-full border border-[#c9c9c9] bg-[#f4f4f4] pl-[9px] text-[13px] tracking-[-0.1px] text-[#606060]"><SearchIcon size={16} sw={1.700} className="mr-[10px] text-[#2b2b2b]" />Search</div>
        <div className="ml-[3px] flex w-[396px] shrink-0">
          {pinned.map((p, i) => (
            <div key={i} className="flex h-[46px] w-11 flex-col items-center pt-px">
              <div className="flex h-[36px] items-center justify-center pt-[6px]">{p.icon}</div>
              {p.dot && <div className="mt-px h-[3px] w-[6px] rounded-full bg-[#7b7b7b]" />}
            </div>
          ))}
        </div>
        <div className="mb-px ml-[3px] flex h-[39px] w-[38px] shrink-0 items-stretch rounded-md border border-[#e8e8e8] bg-[#e6e6e6]">
          <div className="relative flex w-[34px] items-center justify-center rounded-md bg-[#f1f1f1] pl-px"><Cloud w={21} h={17} /><div className="absolute bottom-0 left-[10px] h-[3px] w-4 rounded-full bg-[#0a78d4]" /></div>
        </div>
        <Svg w={12} h={7} sw={1.400} className="ml-[71px]"><path d="m1 6.500 5-5 5 5" /></Svg>
        <div className="mb-px ml-[10px] flex h-[39px] w-8 shrink-0 items-center justify-center rounded bg-[#0a6cc4] text-white"><Svg w={12} h={16} sw={1.200}><rect x="3.500" y=".5" width="5" height="9.500" rx="2.500" fill="currentColor" /><path d="M1 7.500a5 5 0 0 0 10 0M6 12.500V16" /></Svg></div>
        <Svg size={16} sw={1.300} className="mb-px ml-[7px] text-[#2453a0]"><path d="M14.500 1 1 7.500l6 1.700L11 15Z" /></Svg>
        <div className="mb-px ml-[14px] w-[34px] shrink-0 text-center text-[11.500px] leading-4 tracking-[0.1px]">ENG<br />IN</div>
        <Svg w={16} h={13} sw={1.200} className="mb-px ml-[13px]"><path d="M.7 4.800a10.300 10.300 0 0 1 14.600 0M3 7.200a7 7 0 0 1 10 0M5.300 9.500a3.800 3.800 0 0 1 5.400 0" /><circle cx="8" cy="11.500" r="1.200" fill="currentColor" stroke="none" /></Svg>
        <Volume className="mb-px ml-2" />
        <Svg w={17} h={14} sw={1.100} className="mb-[2px] ml-[7px]"><rect x="1" y="4" width="13" height="8.500" rx="1.500" /><path d="M4 6h8.500v5H3Z" fill="currentColor" /><path d="M15 7v3" strokeWidth="2" /><path d="M3.500 0 1 5h2v4l3.500-5.500H4L5.500 0Z" fill="currentColor" stroke="none" /></Svg>
        <div className="mb-[2px] ml-[10px] w-[68px] shrink-0 whitespace-nowrap text-right text-[11.500px] leading-4 tracking-[0.25px]">00:04<br />18-05-2025</div>
      </div>
    </div>
  );
}
